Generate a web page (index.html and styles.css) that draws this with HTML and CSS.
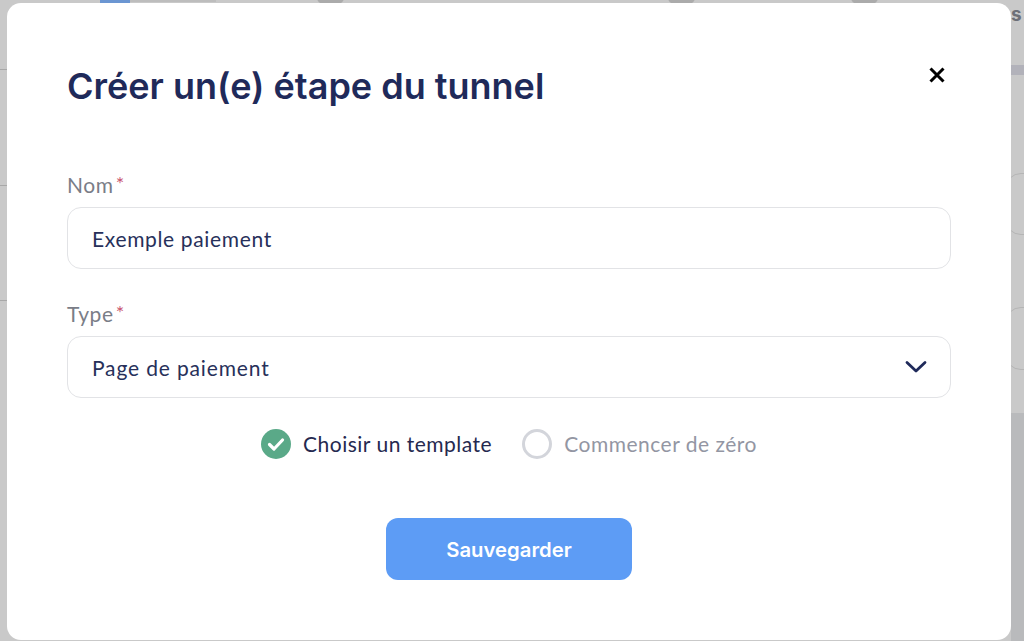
FILE: index.html
```html
<!DOCTYPE html>
<html lang="fr">
<head>
<meta charset="utf-8">
<title>Créer un(e) étape du tunnel</title>
<link rel="stylesheet" href="styles.css">
</head>
<body>
<div class="backdrop" aria-hidden="true">
  <span class="bd-blue"></span>
  <span class="bd-tab"></span>
  <span class="bd-dot bd-dot-1"></span>
  <span class="bd-dot bd-dot-2"></span>
  <span class="bd-dot bd-dot-3"></span>
  <span class="bd-s">s</span>
  <span class="bd-line bd-line-1"></span>
  <span class="bd-line bd-line-2"></span>
  <span class="bd-line bd-line-3"></span>
  <span class="bd-bar"></span>
  <span class="bd-box bd-box-1"></span>
  <span class="bd-box bd-box-2"></span>
  <span class="bd-lower"></span>
</div>
<main class="modal">
  <header class="modal-head">
    <h1 class="title">Créer un(e) étape du tunnel</h1>
    <svg class="close" viewBox="0 0 16 16" width="16" height="16" aria-label="Fermer"><path d="M1.5 1.5 14.5 14.5M14.5 1.5 1.5 14.5" fill="none" stroke="#000" stroke-width="3"/></svg>
  </header>
  <form class="form">
    <div class="field field-name">
      <label class="label">Nom<span class="req">*</span></label>
      <div class="control">Exemple paiement</div>
    </div>
    <div class="field field-type">
      <label class="label">Type<span class="req">*</span></label>
      <div class="control control-select">
        <span>Page de paiement</span>
        <svg class="chevron" viewBox="0 0 22 14" width="22" height="14"><path d="M2 2.5 11 11 20 2.5" fill="none" stroke="#1f2a5a" stroke-width="2.8" stroke-linecap="round" stroke-linejoin="round"/></svg>
      </div>
    </div>
    <div class="choices">
      <div class="choice">
        <svg class="radio" viewBox="0 0 30 30" width="30" height="30"><circle cx="15" cy="15" r="15" fill="#5aa988"/><path d="M8.5 15.5 13 20 21.5 11" fill="none" stroke="#fff" stroke-width="3.2" stroke-linecap="round" stroke-linejoin="round"/></svg>
        <span class="choice-on">Choisir un template</span>
      </div>
      <div class="choice">
        <span class="radio-empty"></span>
        <span class="choice-off">Commencer de zéro</span>
      </div>
    </div>
    <div class="actions">
      <button class="save" type="button">Sauvegarder</button>
    </div>
  </form>
</main>
</body>
</html>
```
FILE: styles.css
```css
* { box-sizing: border-box; }
html, body { margin: 0; height: 100%; }
body {
  position: relative;
  width: 1024px;
  height: 641px;
  overflow: hidden;
  background: #c9c9c9;
  font-family: "Lato", "Noto Sans", sans-serif;
}
.backdrop { position: absolute; inset: 0; }
.backdrop span { position: absolute; display: block; }
.bd-blue { left: 100px; top: 0; width: 30px; height: 4px; background: #6b96d2; }
.bd-tab { left: 130px; top: 0; width: 86px; height: 2px; background: #bdbdbd; }
.bd-dot { top: -10px; width: 27px; height: 16px; border-radius: 50%; background: #ababab; }
.bd-dot-1 { left: 317px; }
.bd-dot-2 { left: 668px; }
.bd-dot-3 { left: 851px; }
.bd-s { left: 1011px; top: 3px; font: 700 19px/24px "Inter", sans-serif; color: #6d7078; }
.bd-line { left: 0; width: 8px; height: 1px; background: #a8a8a8; }
.bd-line-1 { top: 69px; }
.bd-line-2 { top: 185px; }
.bd-line-3 { top: 300px; }
.bd-bar { left: 1011px; top: 65px; width: 13px; height: 10px; background: #b2b2ba; }
.bd-box { left: 1005px; width: 40px; border: 1px solid #b5b5b5; border-radius: 16px; }
.bd-box-1 { top: 173px; height: 62px; }
.bd-box-2 { top: 307px; height: 63px; }
.bd-lower { left: 1011px; top: 413px; width: 13px; height: 228px; background: #b9babc; }

.modal {
  position: absolute;
  left: 7px;
  top: 3px;
  width: 1004px;
  height: 637px;
  padding: 60px 60px 0;
  background: #fff;
  border-radius: 14px;
}
.modal-head {
  display: flex;
  justify-content: space-between;
  align-items: flex-start;
  height: 109px;
}
.title {
  margin: 0;
  font: 600 36px/46px "Inter", sans-serif;
  color: #1f2a5a;
}
.close { margin: 4px 6px 0 0; }
.form { display: flex; flex-direction: column; }
.field-type { margin-top: 32px; }
.label {
  display: block;
  height: 28px;
  margin-bottom: 7px;
  font-size: 21px;
  line-height: 22px;
  letter-spacing: .6px;
  color: #7a7d87;
}
.req { margin-left: 2px; font-size: 20px; vertical-align: 2px; color: #c9566f; }
.control {
  display: flex;
  align-items: center;
  justify-content: space-between;
  height: 62px;
  padding: 0 23px 0 24px;
  border: 1px solid #e2e3e6;
  border-radius: 14px;
  font-size: 21px;
  letter-spacing: .65px;
  color: #27305a;
}
.control-select { letter-spacing: .85px; }
.choices {
  display: flex;
  justify-content: center;
  gap: 30px;
  margin-top: 31px;
  font-size: 21px;
  letter-spacing: .5px;
}
.choice { display: flex; align-items: center; gap: 12px; height: 30px; }
.choice-on { padding-bottom: 2px; color: #25294f; }
.choice-off { padding-bottom: 2px; color: #9396a3; }
.radio-empty {
  width: 30px;
  height: 30px;
  border: 3px solid #d3d5db;
  border-radius: 50%;
}
.actions { display: flex; justify-content: center; margin-top: 59px; }
.save {
  width: 246px;
  height: 62px;
  border: 0;
  border-radius: 12px;
  background: #5d9cf5;
  color: #fff;
  font: 600 20.3px "Inter", sans-serif;
}
```
